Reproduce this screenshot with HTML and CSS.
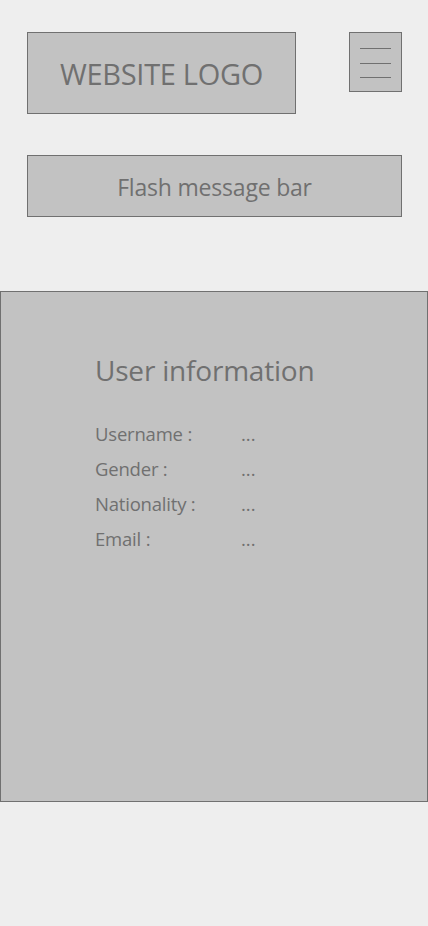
FILE: index.html
```html
<!DOCTYPE html>
<html>
<head>
<meta charset="utf-8">
<link rel="stylesheet" href="styles.css">
</head>
<body>
<header class="header">
  <div class="logo">WEBSITE LOGO</div>
  <button class="menu" aria-label="Menu">
    <span class="bar"></span>
    <span class="bar"></span>
    <span class="bar"></span>
  </button>
</header>
<div class="flash">Flash message bar</div>
<main class="panel">
  <h1 class="title">User information</h1>
  <dl class="info">
    <div class="row"><dt>Username :</dt><dd>...</dd></div>
    <div class="row"><dt>Gender :</dt><dd>...</dd></div>
    <div class="row"><dt>Nationality :</dt><dd>...</dd></div>
    <div class="row"><dt>Email :</dt><dd>...</dd></div>
  </dl>
</main>
</body>
</html>
```
FILE: styles.css
```css
html, body {
  margin: 0;
  padding: 0;
  background: #eeeeee;
}
body {
  font-family: "Open Sans", "Noto Sans", sans-serif;
  color: #707070;
  width: 428px;
  height: 926px;
}
.header {
  display: flex;
  justify-content: space-between;
  align-items: flex-start;
  padding: 32px 26px 0 27px;
}
.logo {
  box-sizing: border-box;
  width: 269px;
  height: 82px;
  background: #c2c2c2;
  border: 1px solid #707070;
  display: flex;
  align-items: center;
  justify-content: center;
  font-size: 29px;
  letter-spacing: -0.3px;
  padding-top: 1px;
}
.menu {
  box-sizing: border-box;
  width: 53px;
  height: 60px;
  background: #c2c2c2;
  border: 1px solid #707070;
  padding: 15px 10px 0 10px;
  margin: 0;
  display: flex;
  flex-direction: column;
  align-items: center;
  gap: 13.5px;
}
.bar {
  display: block;
  width: 31px;
  height: 1px;
  background: #707070;
}
.flash {
  box-sizing: border-box;
  margin: 41px 26px 0 27px;
  height: 62px;
  background: #c2c2c2;
  border: 1px solid #707070;
  display: flex;
  align-items: center;
  justify-content: center;
  font-size: 23px;
  letter-spacing: -0.2px;
  padding-top: 2px;
}
.panel {
  box-sizing: border-box;
  display: block;
  margin-top: 74px;
  height: 511px;
  background: #c2c2c2;
  border: 1px solid #707070;
  padding: 56px 0 0 94px;
}
.title {
  margin: 0;
  font-weight: normal;
  font-size: 28px;
  line-height: 44px;
  letter-spacing: -0.2px;
}
.info {
  margin: 24px 0 0 0;
  display: flex;
  flex-direction: column;
}
.row {
  display: flex;
  height: 35px;
  align-items: center;
  font-size: 18.5px;
}
.row dt {
  width: 146px;
  letter-spacing: -0.2px;
}
.row dd {
  margin: 0;
}
```
